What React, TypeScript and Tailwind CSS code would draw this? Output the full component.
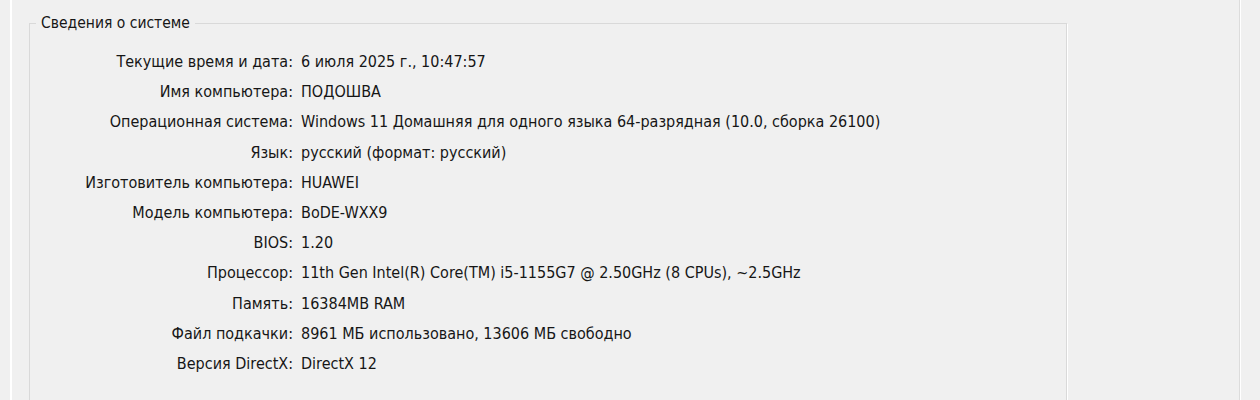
import React from "react";

const rows: [string, string][] = [
  ["Текущие время и дата:", "6 июля 2025 г., 10:47:57"],
  ["Имя компьютера:", "ПОДОШВА"],
  ["Операционная система:", "Windows 11 Домашняя для одного языка 64-разрядная (10.0, сборка 26100)"],
  ["Язык:", "русский (формат: русский)"],
  ["Изготовитель компьютера:", "HUAWEI"],
  ["Модель компьютера:", "BoDE-WXX9"],
  ["BIOS:", "1.20"],
  ["Процессор:", "11th Gen Intel(R) Core(TM) i5-1155G7 @ 2.50GHz (8 CPUs), ~2.5GHz"],
  ["Память:", "16384MB RAM"],
  ["Файл подкачки:", "8961 МБ использовано, 13606 МБ свободно"],
  ["Версия DirectX:", "DirectX 12"],
];

export default function App() {
  return (
    <div
      className="flex h-[400px] w-[1260px] overflow-hidden bg-[#f0f0f0] text-[#161616]"
      style={{ fontFamily: '"DejaVu Sans Condensed", "DejaVu Sans", sans-serif' }}
    >
      <div className="w-[10px] shrink-0" />
      <div className="w-[2px] shrink-0 bg-white" />
      <div className="flex-1 pl-[17px] pt-[14px]">
        <fieldset className="h-[420px] w-[1038px] border border-[#d9d9d9] shadow-[1px_1px_0_#ffffff]">
          <legend className="ml-[6px] px-[5px] text-[15.5px] leading-[18px]">Сведения о системе</legend>
          <div className="grid grid-cols-[263px_1fr] gap-x-[8px] pt-[15px] text-[16px] leading-[30.2px]">
            {rows.map(([k, v]) => (
              <React.Fragment key={k}>
                <div className="text-right whitespace-nowrap">{k}</div>
                <div className="whitespace-nowrap">{v}</div>
              </React.Fragment>
            ))}
          </div>
        </fieldset>
      </div>
      <div className="w-[1px] shrink-0 bg-[#dcdcdc]" />
      <div className="w-[1px] shrink-0 bg-white" />
      <div className="w-[19px] shrink-0" />
    </div>
  );
}
